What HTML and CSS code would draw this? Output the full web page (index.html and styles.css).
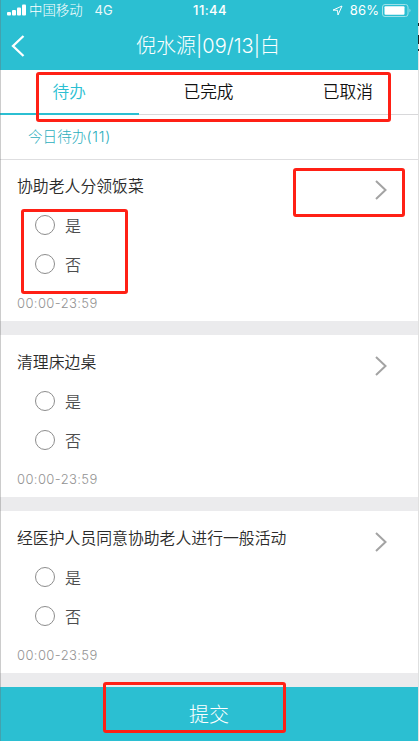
FILE: index.html
```html
<!DOCTYPE html>
<html lang="zh-CN">
<head>
<meta charset="utf-8">
<title>待办</title>
<link rel="stylesheet" href="styles.css">
</head>
<body>
<div class="phone">
  <header class="header">
    <div class="status">
      <div class="carrier">
        <svg class="signal" width="19" height="12" viewBox="0 0 19 12" fill="#fff"><rect x="0" y="8" width="4" height="3.5" rx="1"/><rect x="5" y="6" width="4" height="5.5" rx="1"/><rect x="10" y="3.5" width="4" height="8" rx="1"/><rect x="15" y="0.5" width="4" height="11" rx="1"/></svg>
        <span class="operator">中国移动</span><span class="network">4G</span>
      </div>
      <div class="clock">11:44</div>
      <div class="power">
        <svg width="11" height="11" viewBox="0 0 11 11" fill="none" stroke="#fff" stroke-width="1"><path d="M1 5.1L10 1 6 10 5.5 5.3Z"/></svg>
        <span class="percent">86%</span>
        <svg class="battery" width="30" height="13" viewBox="0 0 30 13"><rect x=".5" y=".5" width="25.5" height="12" rx="2.5" fill="none" stroke="#9de1e9"/><rect x="2.5" y="2.3" width="20" height="8.5" rx="1" fill="#fff"/><path d="M27.5 4.5q2 2 0 4z" fill="#9de1e9"/></svg>
      </div>
    </div>
    <div class="nav">
      <svg class="back" width="14" height="22" viewBox="0 0 14 22" fill="none" stroke="#fff" stroke-width="2.3"><path d="M12.5 1L2 11 12.5 21"/></svg>
      <h1 class="title">倪水源|09/13|白</h1>
    </div>
  </header>
  <nav class="tabs">
    <div class="tab active">待办</div>
    <div class="tab">已完成</div>
    <div class="tab">已取消</div>
  </nav>
  <div class="summary">今日待办<span class="count">(11)</span></div>
  <main>
    <section class="card">
      <div class="card-head"><h2>协助老人分领饭菜</h2><svg class="chevron" width="12" height="20" viewBox="0 0 12 20"><path d="M1 1L10.5 10 1 19"/></svg></div>
      <div class="option"><i class="radio"></i>是</div>
      <div class="option"><i class="radio"></i>否</div>
      <div class="time">00:00-23:59</div>
    </section>
    <section class="card">
      <div class="card-head"><h2>清理床边桌</h2><svg class="chevron" width="12" height="20" viewBox="0 0 12 20"><path d="M1 1L10.5 10 1 19"/></svg></div>
      <div class="option"><i class="radio"></i>是</div>
      <div class="option"><i class="radio"></i>否</div>
      <div class="time">00:00-23:59</div>
    </section>
    <section class="card">
      <div class="card-head"><h2>经医护人员同意协助老人进行一般活动</h2><svg class="chevron" width="12" height="20" viewBox="0 0 12 20"><path d="M1 1L10.5 10 1 19"/></svg></div>
      <div class="option"><i class="radio"></i>是</div>
      <div class="option"><i class="radio"></i>否</div>
      <div class="time">00:00-23:59</div>
    </section>
  </main>
  <footer class="submit">提交</footer>
  <div class="left-edge"></div>
  <div class="mark mark-tabs"></div>
  <div class="mark mark-detail"></div>
  <div class="mark mark-options"></div>
  <div class="mark mark-submit"></div>
</div>
<div class="margin"><i class="speck speck-a"></i><i class="speck speck-b"></i><i class="speck speck-c"></i></div>
</body>
</html>
```

FILE: styles.css
```css
* { box-sizing: border-box; }
body {
  margin: 0;
  width: 419px;
  height: 741px;
  overflow: hidden;
  display: flex;
  background: #fff;
  font-family: Inter, "Noto Sans CJK SC", sans-serif;
  font-weight: 300;
}
.phone { position: relative; width: 418px; height: 741px; flex: none; display: flex; flex-direction: column; background: #ebebed; }
.header { height: 70px; flex: none; background: #2bbfd2; color: #fff; }
.status { height: 21px; display: grid; grid-template-columns: 1fr auto 1fr; align-items: center; padding: 0 6px 0 7px; font-size: 13px; line-height: 21px; }
.carrier { display: flex; align-items: center; }
.operator { margin-left: 3px; font-size: 13.4px; }
.network { margin-left: 12px; font-weight: 400; opacity: .9; }
.signal { margin-top: -1px; }
.clock { padding-left: 1px; font-size: 13px; font-weight: 500; letter-spacing: .4px; }
.power { display: flex; justify-content: flex-end; align-items: center; }
.percent { margin: 0 3px 0 7px; font-weight: 400; letter-spacing: .1px; }
.nav { height: 49px; display: grid; grid-template-columns: 47px 1fr 49px; align-items: center; }
.back { margin-left: 11px; }
.title { margin: 0; text-align: center; font-size: 20px; font-weight: 300; line-height: 49px; padding-top: 1px; }
.tabs { height: 45px; flex: none; display: flex; background: #fff; border-bottom: 1px solid #d8d8da; }
.tab { flex: 1; height: 45px; padding-right: 1px; text-align: center; font-size: 16.7px; font-weight: 350; line-height: 44px; color: #111; }
.tab.active { color: #2bbfd2; border-bottom: 2px solid #2bbfd2; }
.summary { height: 45px; flex: none; padding-left: 28px; background: #fff; border-bottom: 1px solid #dedee0; color: #2baebd; font-size: 14.6px; line-height: 45px; }
.count { letter-spacing: .8px; }
.card { height: 162px; margin-bottom: 14px; padding: 12px 31px 0 17px; background: #fff; }
.card:first-child { height: 161px; padding-top: 11px; }
.card-head { height: 34px; display: flex; justify-content: space-between; }
h2 { margin: 0; font-size: 15.85px; line-height: 31px; font-weight: 350; color: #2b2b2b; }
.chevron { margin-top: 9px; fill: none; stroke: #a3a3a3; stroke-width: 2; }
.option { height: 39px; display: flex; align-items: center; padding-left: 18px; color: #4d4d4d; font-size: 16px; font-weight: 350; gap: 10px; }
.radio { width: 20px; height: 20px; border: 1px solid #8d8d8d; border-radius: 50%; }
.time { font-size: 13px; line-height: 20px; margin-top: 10px; color: #939393; letter-spacing: .4px; }
.submit { height: 54px; flex: none; text-align: center; background: #2bbfd2; color: #fff; font-size: 20px; line-height: 56px; }
.left-edge { position: absolute; left: 0; top: 0; width: 1px; height: 741px; background: rgba(110, 110, 110, .35); }
.mark { position: absolute; border: 3px solid #ff2015; border-radius: 3px; }
.mark-tabs { left: 36px; top: 72px; width: 355px; height: 50px; }
.mark-detail { left: 293px; top: 168px; width: 112px; height: 49px; }
.mark-options { left: 21px; top: 209px; width: 107px; height: 85px; }
.mark-submit { left: 103px; top: 682px; width: 183px; height: 51px; }
.margin { position: relative; width: 1px; height: 741px; background: #e0e0e0; }
.speck { position: absolute; left: 0; width: 1px; background: #222; }
.speck-a { top: 23px; height: 3px; }
.speck-b { top: 35px; height: 9px; }
.speck-c { top: 49px; height: 2px; }
```
